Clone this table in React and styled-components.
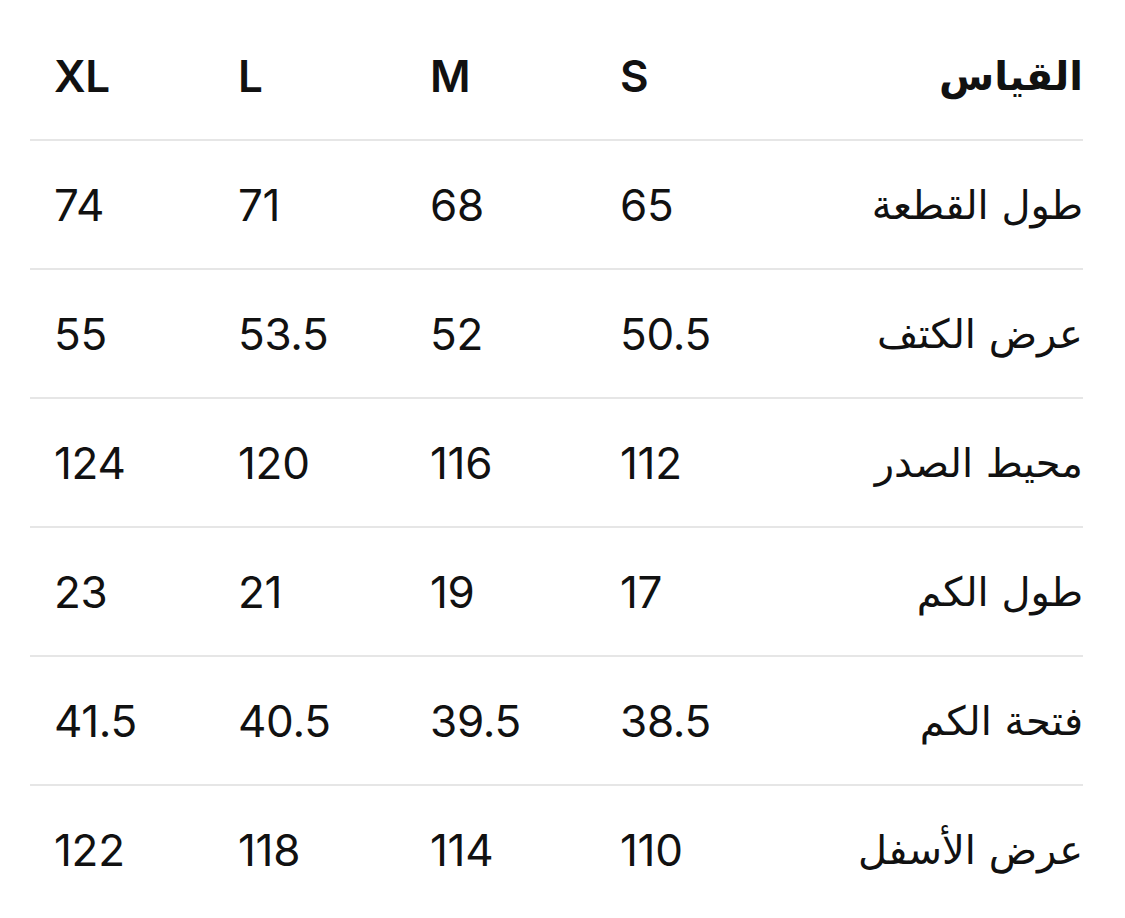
import React from "react";
import styled, { createGlobalStyle } from "styled-components";

const Global = createGlobalStyle`
  html, body { margin: 0; padding: 0; background: #ffffff; }
  body { font-family: Inter, "DejaVu Sans", sans-serif; color: #111111; }
`;

const Page = styled.div`
  padding: 12px 42px 0 30px;
  direction: rtl;
`;

const Table = styled.div`
  display: grid;
  grid-template-columns: 1fr 190px 190px 192px 184px;
`;

const Cell = styled.div`
  height: 127px;
  display: flex;
  align-items: center;
  justify-content: flex-start;
  padding-left: 24px;
  direction: ltr;
  font-size: 44px;
  font-weight: ${(p) => (p.$head ? 600 : 400)};
  letter-spacing: -0.3px;
  border-bottom: ${(p) => (p.$last ? "none" : "2px solid #e6e6e6")};
  white-space: nowrap;
`;

const LabelCell = styled(Cell)`
  padding-left: 0;
  direction: rtl;
  letter-spacing: 0;
  font-family: "DejaVu Sans", sans-serif;
  font-size: 40px;
`;

const sizes = ["S", "M", "L", "XL"];
const rows = [
  ["طول القطعة", "65", "68", "71", "74"],
  ["عرض الكتف", "50.5", "52", "53.5", "55"],
  ["محيط الصدر", "112", "116", "120", "124"],
  ["طول الكم", "17", "19", "21", "23"],
  ["فتحة الكم", "38.5", "39.5", "40.5", "41.5"],
  ["عرض الأسفل", "110", "114", "118", "122"],
];

export default function App() {
  return (
    <Page>
      <Global />
      <Table>
        <LabelCell $head>القياس</LabelCell>
        {sizes.map((s) => (
          <Cell key={s} $head>
            {s}
          </Cell>
        ))}
        {rows.map((r, i) => {
          const last = i === rows.length - 1;
          return (
            <React.Fragment key={r[0]}>
              <LabelCell $last={last}>{r[0]}</LabelCell>
              {r.slice(1).map((v, j) => (
                <Cell key={j} $last={last}>
                  {v}
                </Cell>
              ))}
            </React.Fragment>
          );
        })}
      </Table>
    </Page>
  );
}
